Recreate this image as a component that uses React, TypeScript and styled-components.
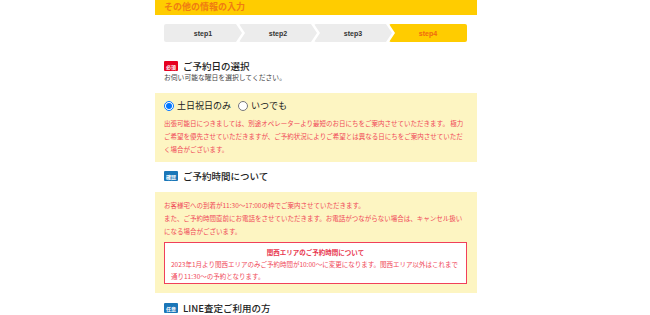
import React from 'react'
import styled, { createGlobalStyle } from 'styled-components'

const GlobalStyle = createGlobalStyle`
  body {
    margin: 0;
    background: #fff;
    font-family: "Noto Sans CJK JP", "Noto Sans", sans-serif;
    color: #333;
  }
`

const steps = ['step1', 'step2', 'step3', 'step4']

const App: React.FC = () => {
  return (
    <>
      <GlobalStyle />
      <Page>
        <Column>
          <Header>その他の情報の入力</Header>
          <Steps>
            {steps.map((s, i) => (
              <Step key={s} first={i === 0} active={i === 3}>
                {s}
              </Step>
            ))}
          </Steps>

          <Section top={18}>
            <TitleRow>
              <Badge kind="required">必須</Badge>
              <Title>ご予約日の選択</Title>
            </TitleRow>
            <Sub>お伺い可能な曜日を選択してください。</Sub>
          </Section>
          <YellowBox gap={11}>
            <Radios>
              <RadioLabel>
                <input type="radio" name="day" defaultChecked />
                土日祝日のみ
              </RadioLabel>
              <RadioLabel>
                <input type="radio" name="day" />
                いつでも
              </RadioLabel>
            </Radios>
            <Note>
              出張可能日につきましては、別途オペレーターより最短のお日にちをご案内させていただきます。 極力ご希望を優先させていただきますが、ご予約状況によりご希望とは異なる日にちをご案内させていただく場合がございます。
            </Note>
          </YellowBox>

          <Section top={8}>
            <TitleRow>
              <Badge kind="info">確認</Badge>
              <Title>ご予約時間について</Title>
            </TitleRow>
          </Section>
          <YellowBox gap={10}>
            <Note>
              お客様宅への到着が11:30～17:00の枠でご案内させていただきます。
              <br />
              また、ご予約時間直前にお電話をさせていただきます。お電話がつながらない場合は、キャンセル扱いになる場合がございます。
            </Note>
            <AlertBox>
              <AlertTitle>関西エリアのご予約時間について</AlertTitle>
              <AlertText>
                2023年1月より関西エリアのみご予約時間が10:00～に変更になります。関西エリア以外はこれまで通り11:30～の予約となります。
              </AlertText>
            </AlertBox>
          </YellowBox>

          <Section top={9}>
            <TitleRow>
              <Badge kind="info">任意</Badge>
              <Title>LINE査定ご利用の方</Title>
            </TitleRow>
          </Section>
        </Column>
      </Page>
    </>
  )
}

export default App

const Page = styled.div`
  width: 650px;
  height: 315px;
  overflow: hidden;
  padding-left: 155px;
  box-sizing: border-box;
`
const Column = styled.div`
  width: 322px;
  display: flex;
  flex-direction: column;
`
const Header = styled.div`
  background: #ffcc00;
  color: #f07c12;
  font-size: 9px;
  font-weight: bold;
  height: 15px;
  line-height: 13px;
  padding-left: 9px;
`
const Steps = styled.div`
  display: flex;
  margin: 9px 10px 0 9px;
  height: 18px;
`
const Step = styled.div<{ first: boolean; active: boolean }>`
  flex: 1;
  display: flex;
  align-items: center;
  justify-content: center;
  font-size: 7px;
  font-weight: bold;
  font-family: "Liberation Sans", Arial, sans-serif;
  color: ${({ active }) => (active ? '#f06a10' : '#333')};
  background: ${({ active }) => (active ? '#ffcc00' : '#ececec')};
  margin-left: ${({ first }) => (first ? '0' : '-3px')};
  border-radius: 2px;
  clip-path: ${({ first, active }) =>
    active
      ? 'polygon(0 0, 100% 0, 100% 100%, 0 100%, 6px 50%)'
      : first
      ? 'polygon(0 0, calc(100% - 6px) 0, 100% 50%, calc(100% - 6px) 100%, 0 100%)'
      : 'polygon(0 0, calc(100% - 6px) 0, 100% 50%, calc(100% - 6px) 100%, 0 100%, 6px 50%)'};
`
const Section = styled.div<{ top: number }>`
  padding: ${({ top }) => top}px 9px 0 9px;
`
const TitleRow = styled.div`
  display: flex;
  align-items: center;
  gap: 5px;
`
const Badge = styled.span<{ kind: 'required' | 'info' }>`
  display: inline-flex;
  align-items: center;
  justify-content: center;
  width: 14px;
  height: 10px;
  font-size: 5px;
  font-weight: bold;
  color: #fff;
  background: ${({ kind }) => (kind === 'required' ? '#e60020' : '#1a76b8')};
  border-radius: 1px;
`
const Title = styled.div`
  font-size: 9.5px;
  font-weight: 500;
  color: #222;
  line-height: 12px;
`
const Sub = styled.div`
  font-size: 6.8px;
  color: #444;
  margin-top: 1px;
  line-height: 9px;
`
const YellowBox = styled.div<{ gap: number }>`
  background: #fdf5c2;
  margin-top: ${({ gap }) => gap}px;
  padding: 7px 10px 6px 9px;
`
const Radios = styled.div`
  display: flex;
  align-items: center;
  gap: 7px;
  margin-bottom: 5px;
`
const RadioLabel = styled.label`
  display: flex;
  align-items: center;
  gap: 2px;
  font-size: 9px;
  color: #222;
  line-height: 12px;
  input {
    width: 10px;
    height: 10px;
    margin: 0 1px 0 0;
  }
`
const Note = styled.div`
  font-size: 6.5px;
  line-height: 13px;
  color: #f04858;
`
const AlertBox = styled.div`
  margin-top: 4px;
  margin-bottom: 3px;
  border: 1px solid #f0405a;
  background: #fff;
  padding: 3px 6px 1px 6px;
`
const AlertTitle = styled.div`
  text-align: center;
  font-size: 6.5px;
  font-weight: bold;
  color: #e8384f;
  line-height: 12px;
`
const AlertText = styled.div`
  font-size: 6.5px;
  line-height: 12px;
  color: #f04858;
`
